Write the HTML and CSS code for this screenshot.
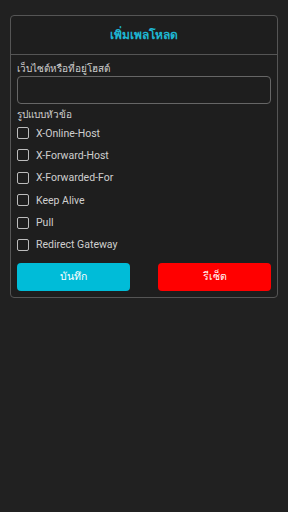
FILE: index.html
```html
<!DOCTYPE html>
<html lang="th">
<head>
  <meta charset="UTF-8">
  <meta name="viewport" content="width=device-width, initial-scale=1.0">
  <title>เพิ่มเพลโหลด</title>
  <link rel="stylesheet" href="styles.css">
</head>
<body>
  <div class="dialog">
    <div class="dialog-title">เพิ่มเพลโหลด</div>
    <div class="dialog-body">
      <label class="field-label" for="host">เว็บไซต์หรือที่อยู่โฮสต์</label>
      <input class="field-input" id="host" type="text">

      <div class="field-label">รูปแบบหัวข้อ</div>
      <div class="options">
        <label class="option"><span class="box"></span>X-Online-Host</label>
        <label class="option"><span class="box"></span>X-Forward-Host</label>
        <label class="option"><span class="box"></span>X-Forwarded-For</label>
        <label class="option"><span class="box"></span>Keep Alive</label>
        <label class="option"><span class="box"></span>Pull</label>
        <label class="option"><span class="box"></span>Redirect Gateway</label>
      </div>

      <div class="buttons">
        <button class="btn save">บันทึก</button>
        <button class="btn reset">รีเซ็ต</button>
      </div>
    </div>
  </div>
</body>
</html>
```

FILE: styles.css
```css
body {
  margin: 0;
  background: #212121;
  font-family: Roboto, "Noto Sans", sans-serif;
  color: #cfcfcf;
}
.dialog {
  margin: 15px 10px 0;
  border: 1px solid #555;
  border-radius: 4px;
  background: #1e1e1e;
}
.dialog-title {
  height: 38px;
  line-height: 38px;
  text-align: center;
  color: #1eb6d2;
  font-size: 12px;
  font-weight: bold;
  border-bottom: 1px solid #555;
}
.dialog-body {
  padding: 7px 6px 6px;
}
.field-label {
  display: block;
  font-size: 10px;
  line-height: 14px;
  color: #cfcfcf;
}
.field-input {
  display: block;
  box-sizing: border-box;
  width: 100%;
  height: 28px;
  margin: 0 0 4px;
  background: transparent;
  border: 1px solid #666;
  border-radius: 4px;
  outline: none;
}
.options {
  display: flex;
  flex-direction: column;
  gap: 8.4px;
  margin-top: 4px;
}
.option {
  display: flex;
  align-items: center;
  gap: 7px;
  height: 14px;
  font-size: 10.5px;
  color: #cfcfcf;
}
.box {
  box-sizing: border-box;
  width: 12px;
  height: 12px;
  border: 1.5px solid #bdbdbd;
  border-radius: 2px;
}
.buttons {
  display: flex;
  justify-content: space-between;
  margin-top: 11px;
}
.btn {
  width: 113px;
  height: 28px;
  border: none;
  border-radius: 4px;
  color: #fff;
  font-family: inherit;
  font-size: 10.5px;
}
.btn.save { background: #00bcd8; }
.btn.reset { background: #ff0000; }
```
